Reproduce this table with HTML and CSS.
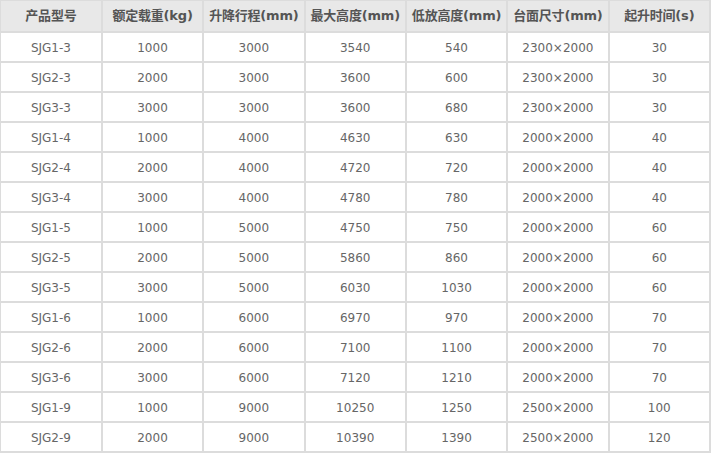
FILE: index.html
```html
<!DOCTYPE html>
<html lang="zh">
<head>
<meta charset="utf-8">
<link rel="stylesheet" href="styles.css">
</head>
<body>
<table class="spec">
<thead>
<tr><th>产品型号</th><th>额定载重(kg)</th><th>升降行程(mm)</th><th>最大高度(mm)</th><th>低放高度(mm)</th><th>台面尺寸(mm)</th><th>起升时间(s)</th></tr>
</thead>
<tbody>
<tr><td>SJG1-3</td><td>1000</td><td>3000</td><td>3540</td><td>540</td><td>2300×2000</td><td>30</td></tr>
<tr><td>SJG2-3</td><td>2000</td><td>3000</td><td>3600</td><td>600</td><td>2300×2000</td><td>30</td></tr>
<tr><td>SJG3-3</td><td>3000</td><td>3000</td><td>3600</td><td>680</td><td>2300×2000</td><td>30</td></tr>
<tr><td>SJG1-4</td><td>1000</td><td>4000</td><td>4630</td><td>630</td><td>2000×2000</td><td>40</td></tr>
<tr><td>SJG2-4</td><td>2000</td><td>4000</td><td>4720</td><td>720</td><td>2000×2000</td><td>40</td></tr>
<tr><td>SJG3-4</td><td>3000</td><td>4000</td><td>4780</td><td>780</td><td>2000×2000</td><td>40</td></tr>
<tr><td>SJG1-5</td><td>1000</td><td>5000</td><td>4750</td><td>750</td><td>2000×2000</td><td>60</td></tr>
<tr><td>SJG2-5</td><td>2000</td><td>5000</td><td>5860</td><td>860</td><td>2000×2000</td><td>60</td></tr>
<tr><td>SJG3-5</td><td>3000</td><td>5000</td><td>6030</td><td>1030</td><td>2000×2000</td><td>60</td></tr>
<tr><td>SJG1-6</td><td>1000</td><td>6000</td><td>6970</td><td>970</td><td>2000×2000</td><td>70</td></tr>
<tr><td>SJG2-6</td><td>2000</td><td>6000</td><td>7100</td><td>1100</td><td>2000×2000</td><td>70</td></tr>
<tr><td>SJG3-6</td><td>3000</td><td>6000</td><td>7120</td><td>1210</td><td>2000×2000</td><td>70</td></tr>
<tr><td>SJG1-9</td><td>1000</td><td>9000</td><td>10250</td><td>1250</td><td>2500×2000</td><td>100</td></tr>
<tr><td>SJG2-9</td><td>2000</td><td>9000</td><td>10390</td><td>1390</td><td>2500×2000</td><td>120</td></tr>
</tbody>
</table>
</body>
</html>
```
FILE: styles.css
```css
html, body {
  margin: 0;
  padding: 0;
  background: #fff;
}
.spec {
  width: 711px;
  border-collapse: collapse;
  table-layout: fixed;
  font-family: "DejaVu Sans", Verdana, "Noto Sans CJK SC", sans-serif;
  font-size: 12px;
  color: #666;
  margin-top: -1px;
}
.spec th, .spec td {
  border: 2px solid #dcdcdc;
  text-align: center;
  padding: 0;
  white-space: nowrap;
  line-height: 14px;
}
.spec th {
  height: 30px;
  background: #e8e8e8;
  font-family: "DejaVu Sans", "Noto Sans CJK SC", sans-serif;
  font-size: 13px;
  font-weight: bold;
  color: #555;
  letter-spacing: -0.2px;
}
.spec td {
  height: 27px;
  padding-top: 1px;
}
.spec tr > :first-child {
  border-left-width: 1px;
}
```
